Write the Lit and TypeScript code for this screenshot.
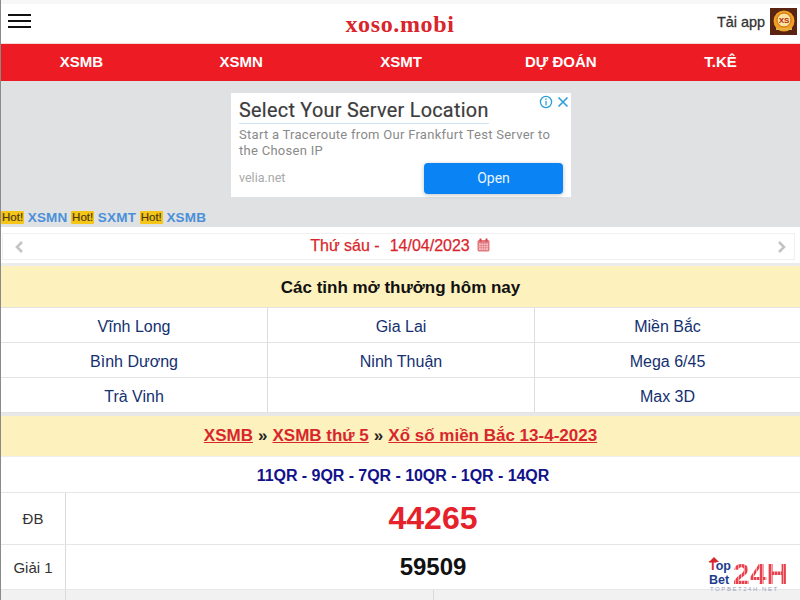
import { LitElement, html, css } from "lit";
import { customElement } from "lit/decorators.js";

@customElement("app-root")
export class AppRoot extends LitElement {
  static styles = css`
    :host { display: block; width: 800px; height: 600px; overflow: hidden; position: relative; font-family: "Liberation Sans", Arial, sans-serif; background: #fff; }
    * { box-sizing: border-box; }
    .page { border-left: 1px solid #8a8a8a; height: 600px; overflow: hidden; background: #fff; }
    .topgap { height: 4px; background: #f7f7f7; }
    .header { height: 39px; background: #fff; display: flex; align-items: center; position: relative; padding: 0 3px 0 7px; }
    .burger { width: 23px; height: 14px; display: flex; flex-direction: column; justify-content: space-between; margin-top: -5px; }
    .burger i { display: block; height: 2px; background: #111; }
    .brand { flex: 1; text-align: center; font: bold 24px "Liberation Serif", serif; color: #d9252c; padding-left: 52px; letter-spacing: 0.65px; margin-top: 1px; }
    .app { display: flex; align-items: center; gap: 5px; font-size: 14.4px; color: #333; font-weight: 500; -webkit-text-stroke: 0.3px #333; margin-top: -4px; }
    .app svg { display: block; }
    .nav { height: 38px; background: #ed1c24; display: grid; grid-template-columns: repeat(5, 1fr); align-items: center; border-top: 1px solid #f4d9d9; padding-bottom: 2px; }
    .nav a { text-align: center; color: #fff; font-weight: bold; font-size: 15px; padding-left: 2px; margin-left: -1px; }
    .grey { background: #dfe1e3; height: 146px; display: flex; flex-direction: column; }
    .ad { width: 340px; height: 104px; margin: 12px 0 0 230px; background: #fff; padding: 6px 8px 0 8px; position: relative; }
    .ad h3 { margin: 0; display: inline-block; font: 400 19.8px/24px Roboto, sans-serif; color: #3c3c3c; border-bottom: 1px solid #cfe3f5; letter-spacing: 0.3px; -webkit-text-stroke: 0.2px #3c3c3c; }
    .ad p { margin: 3px 0 0; font: 13px/16px Roboto, sans-serif; color: #8a8a8a; letter-spacing: 0.28px; }
    .ad .site { position: absolute; left: 8px; bottom: 12px; font: 12.5px Roboto, sans-serif; color: #a9a9a9; }
    .ad .open { position: absolute; left: 193px; top: 70px; width: 139px; height: 31px; background: #0a84f5; color: #e8f3ff; border-radius: 4px; display: flex; align-items: center; justify-content: center; font: 400 14px Roboto, sans-serif; box-shadow: 0 1px 4px rgba(0,0,0,.25); padding-bottom: 2px; }
    .ad .marks { position: absolute; right: 2px; top: 2px; display: flex; gap: 4px; align-items: center; }
    .hotrow { margin-top: 11px; height: 18px; display: flex; align-items: center; gap: 3.6px; font-size: 13.5px; font-weight: bold; color: #4a90d9; padding-left: 0; letter-spacing: 0.2px; }
    .hot { background: #f5c518; color: #4a3a10; font-size: 11.5px; font-weight: normal; padding: 1px 1px; line-height: 11px; border-radius: 1px; letter-spacing: 0; -webkit-text-stroke: 0.2px #4a3a10; }
    .datewrap { background: #fff; height: 39px; padding: 6px 5px 0 0; border-bottom: 3px solid #ececec; }
    .datebar { margin-left: 1px; height: 27px; border: 1px solid #f0f0f0; display: flex; align-items: center; justify-content: space-between; padding: 0 6px 0 10px; }
    .date { display: flex; align-items: center; font-size: 16px; font-weight: 500; color: #d8262c; -webkit-text-stroke: 0.25px #d8262c; gap: 7px; margin-right: 1px; margin-top: -2px; }
    .date .dash { margin-right: 3px; }
    .date svg { margin-top: -2px; }
    .yellow { background: #fdf1bd; display: flex; align-items: center; justify-content: center; }
    .today { height: 42px; border-bottom: 1px solid #e3e3e3; font-size: 17px; font-weight: bold; color: #111; padding-top: 2px; }
    .prov { display: grid; grid-template-columns: 267px 267px 1fr; }
    .prov div { height: 35px; display: flex; align-items: center; justify-content: center; font-size: 16px; color: #14306f; border-bottom: 1px solid #e3e3e3; border-right: 1px solid #dcdcdc; padding-top: 3px; }
    .prov div:nth-child(3n) { border-right: none; }
    .gap { height: 3px; background: #e8e8e8; }
    .crumb { height: 41px; font-size: 17px; font-weight: bold; color: #222; gap: 5px; border-bottom: 1px solid #eeeeee; }
    .crumb a { color: #d8262c; text-decoration: underline; }
    .codes { height: 36px; display: flex; align-items: center; justify-content: center; font-size: 16px; font-weight: bold; color: #12128a; border-bottom: 1px solid #e6e6e6; padding: 2px 0 0 5px; letter-spacing: -0.05px; }
    .row { display: grid; grid-template-columns: 65px 1fr; border-bottom: 1px solid #e6e6e6; }
    .row > div { display: flex; align-items: center; justify-content: center; }
    .row .label { font-size: 15px; color: #333; border-right: 1px solid #dcd8d4; }
    .db { height: 52px; }
    .db .num { font-size: 32px; font-weight: bold; color: #e5212a; }
    .g1 { height: 45px; }
    .g1 .num { font-size: 24px; font-weight: bold; color: #111; }
    .last { display: grid; grid-template-columns: 65px 368px 1fr; height: 12px; background: #f1f1f1; }
    .last i { border-right: 1px solid #dcd8d4; }
    .logo { position: absolute; left: 709px; top: 556px; width: 82px; height: 44px; color: #1d3d8f; }
    .logo .tb { position: absolute; left: 0; top: 3px; width: 24px; font: bold 12.5px/14px "Liberation Sans", sans-serif; }
    .logo .tb span { display: block; }
    .logo .tb em { font-style: normal; color: #d8262c; }
    .logo svg { position: absolute; left: 0; top: 1px; }
    .logo .n { position: absolute; left: 24px; top: 7px; font: bold 30px/22px "Liberation Sans", sans-serif; color: transparent; background: repeating-linear-gradient(90deg, #e8404c 0 2px, #f6a0a6 2px 3px); -webkit-background-clip: text; background-clip: text; }
    .logo .s { position: absolute; left: 1px; top: 30px; font-size: 6px; line-height: 6px; letter-spacing: 1.55px; color: #9aa3bd; white-space: nowrap; }
  `;

  render() {
    const prov = ["Vĩnh Long", "Gia Lai", "Miền Bắc", "Bình Dương", "Ninh Thuận", "Mega 6/45", "Trà Vinh", "", "Max 3D"];
    return html`<div class="page">
      <div class="topgap"></div>
      <div class="header">
        <div class="burger"><i></i><i></i><i></i></div>
        <div class="brand">xoso.mobi</div>
        <div class="app">Tải app
          <svg width="27" height="27" viewBox="0 0 27 27">
            <rect width="27" height="27" fill="#5a2413"/>
            <circle cx="14" cy="13" r="10.5" fill="#f0a020"/>
            <circle cx="14" cy="12" r="7" fill="#fbe3a0" stroke="#c96a10"/>
            <text x="14" y="15" font-size="8" font-weight="bold" text-anchor="middle" fill="#b02a10" font-family="Liberation Sans">XS</text>
            <rect x="6" y="20" width="16" height="2" fill="#e8b040"/>
          </svg>
        </div>
      </div>
      <div class="nav"><a>XSMB</a><a>XSMN</a><a>XSMT</a><a>DỰ ĐOÁN</a><a>T.KÊ</a></div>
      <div class="grey">
        <div class="ad">
          <h3>Select Your Server Location</h3>
          <p>Start a Traceroute from Our Frankfurt Test Server to the Chosen IP</p>
          <div class="site">velia.net</div>
          <div class="open">Open</div>
          <div class="marks">
            <svg width="14" height="14" viewBox="0 0 14 14" fill="none" stroke="#2aa0d8" stroke-width="1.3"><circle cx="7" cy="7" r="5.6"/><path d="M7 6v4.2M7 3.6v1.3"/></svg>
            <svg width="12" height="12" viewBox="0 0 12 12" fill="none" stroke="#2aa0d8" stroke-width="1.6"><path d="M1.5 1.5l9 9M10.5 1.5l-9 9"/></svg>
          </div>
        </div>
        <div class="hotrow"><span class="hot">Hot!</span><b>XSMN</b><span class="hot">Hot!</span><b>SXMT</b><span class="hot">Hot!</span><b>XSMB</b></div>
      </div>
      <div class="datewrap">
        <div class="datebar">
          <svg width="12" height="14" viewBox="0 0 12 14" fill="none" stroke="#c4c4c4" stroke-width="2.6"><path d="M9 2L4 7l5 5"/></svg>
          <div class="date"><span class="dash">Thứ sáu -</span><span>14/04/2023</span>
            <svg width="13" height="14" viewBox="0 0 13 14"><rect x="0.5" y="2" width="12" height="11.5" rx="1.5" fill="#e27a80"/><rect x="2" y="5.5" width="9" height="6.5" fill="#f5c4c6"/><path d="M2 7.5h9M2 9.7h9M4.2 5.5v6.5M6.5 5.5v6.5M8.8 5.5v6.5" stroke="#e27a80" stroke-width=".7"/><rect x="2.5" y="0.5" width="2" height="3" fill="#d8474e"/><rect x="8.5" y="0.5" width="2" height="3" fill="#d8474e"/></svg>
          </div>
          <svg width="12" height="14" viewBox="0 0 12 14" fill="none" stroke="#c4c4c4" stroke-width="2.6"><path d="M3 2l5 5-5 5"/></svg>
        </div>
      </div>
      <div class="yellow today">Các tỉnh mở thưởng hôm nay</div>
      <div class="prov">${prov.map((p) => html`<div>${p}</div>`)}</div>
      <div class="gap"></div>
      <div class="yellow crumb"><a>XSMB</a><span>»</span><a>XSMB thứ 5</a><span>»</span><a>Xổ số miền Bắc 13-4-2023</a></div>
      <div class="codes">11QR - 9QR - 7QR - 10QR - 1QR - 14QR</div>
      <div class="row db"><div class="label">ĐB</div><div class="num">44265</div></div>
      <div class="row g1"><div class="label">Giải 1</div><div class="num">59509</div></div>
      <div class="last"><i></i><i></i><span></span></div>
    </div>
    <div class="logo">
      <svg width="10" height="5" viewBox="0 0 10 5"><path d="M5 0l5 5H0z" fill="#d8262c"/></svg>
      <div class="tb"><span><em>T</em>op</span><span>Bet</span></div>
      <div class="n">24H</div>
      <div class="s">TOPBET24H.NET</div>
    </div>`;
  }
}
